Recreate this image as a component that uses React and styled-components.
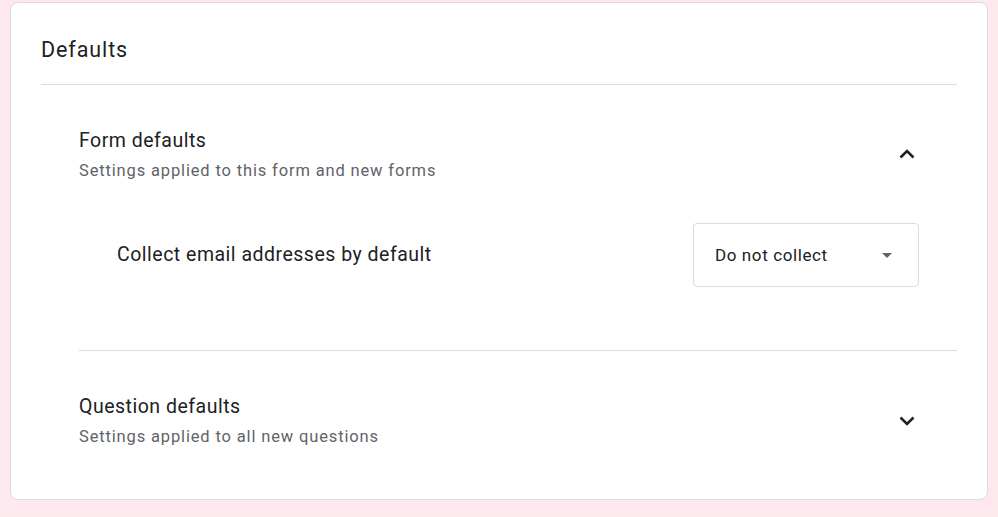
import styled, { createGlobalStyle } from "styled-components";

const GlobalStyle = createGlobalStyle`
  body {
    margin: 0;
    background: #fde8ee;
    font-family: Roboto, "Liberation Sans", Arial, sans-serif;
    color: #202124;
  }
`;

const Page = styled.div`
  padding: 2px 10px 17px;
`;

const Card = styled.div`
  background: #ffffff;
  border: 1px solid #dadce0;
  border-radius: 8px;
  padding: 0 30px;
  height: 498px;
  box-sizing: border-box;
`;

const CardTitle = styled.div`
  font-size: 21.5px;
  line-height: 28px;
  letter-spacing: 0.9px;
  padding: 33px 0 20px;
  border-bottom: 1px solid #dadce0;
`;

const Section = styled.div`
  margin-left: 38px;
  border-bottom: ${(p) => (p.last ? "none" : "1px solid #dadce0")};
  padding: ${(p) => (p.last ? "44px 0 0" : "44px 0 63px")};
`;

const SectionHeader = styled.div`
  display: flex;
  align-items: center;
  justify-content: space-between;
  padding-right: 38px;
`;

const HeaderText = styled.div`
  display: flex;
  flex-direction: column;
  gap: 8px;
`;

const SectionTitle = styled.div`
  font-size: 19.5px;
  line-height: 24px;
  letter-spacing: 0.5px;
`;

const SectionSub = styled.div`
  font-size: 16.5px;
  line-height: 20px;
  color: #5f6368;
  letter-spacing: 0.85px;
`;

const Toggle = styled.button`
  border: none;
  background: none;
  padding: 0;
  width: 24px;
  height: 24px;
  margin-bottom: ${(p) => (p.up ? "3px" : "0")};
  display: flex;
  align-items: center;
  justify-content: center;
  cursor: pointer;
`;

const Row = styled.div`
  display: flex;
  align-items: center;
  justify-content: space-between;
  padding: 0 38px;
  margin-top: 42px;
`;

const RowLabel = styled.div`
  font-size: 19.5px;
  line-height: 24px;
  letter-spacing: 0.5px;
`;

const Select = styled.div`
  width: 226px;
  height: 64px;
  box-sizing: border-box;
  border: 1px solid #dadce0;
  border-radius: 4px;
  display: flex;
  align-items: center;
  justify-content: space-between;
  padding: 0 26px 0 21px;
  font-size: 17px;
  letter-spacing: 0.6px;
`;

const Chevron = ({ up }) => (
  <svg width="16" height="10" viewBox="0 0 16 10">
    <polyline
      points={up ? "1.5,8.5 8,2 14.5,8.5" : "1.5,1.5 8,8 14.5,1.5"}
      fill="none"
      stroke="#202124"
      strokeWidth="2.6"
    />
  </svg>
);

const Caret = () => (
  <svg width="10" height="5" viewBox="0 0 10 5">
    <path d="M0 0h10L5 5z" fill="#5f6368" />
  </svg>
);

export default function App() {
  return (
    <>
      <GlobalStyle />
      <Page>
        <Card>
          <CardTitle>Defaults</CardTitle>
          <Section>
            <SectionHeader>
              <HeaderText>
                <SectionTitle>Form defaults</SectionTitle>
                <SectionSub>Settings applied to this form and new forms</SectionSub>
              </HeaderText>
              <Toggle up>
                <Chevron up />
              </Toggle>
            </SectionHeader>
            <Row>
              <RowLabel>Collect email addresses by default</RowLabel>
              <Select>
                <span>Do not collect</span>
                <Caret />
              </Select>
            </Row>
          </Section>
          <Section last>
            <SectionHeader>
              <HeaderText>
                <SectionTitle>Question defaults</SectionTitle>
                <SectionSub>Settings applied to all new questions</SectionSub>
              </HeaderText>
              <Toggle>
                <Chevron />
              </Toggle>
            </SectionHeader>
          </Section>
        </Card>
      </Page>
    </>
  );
}
